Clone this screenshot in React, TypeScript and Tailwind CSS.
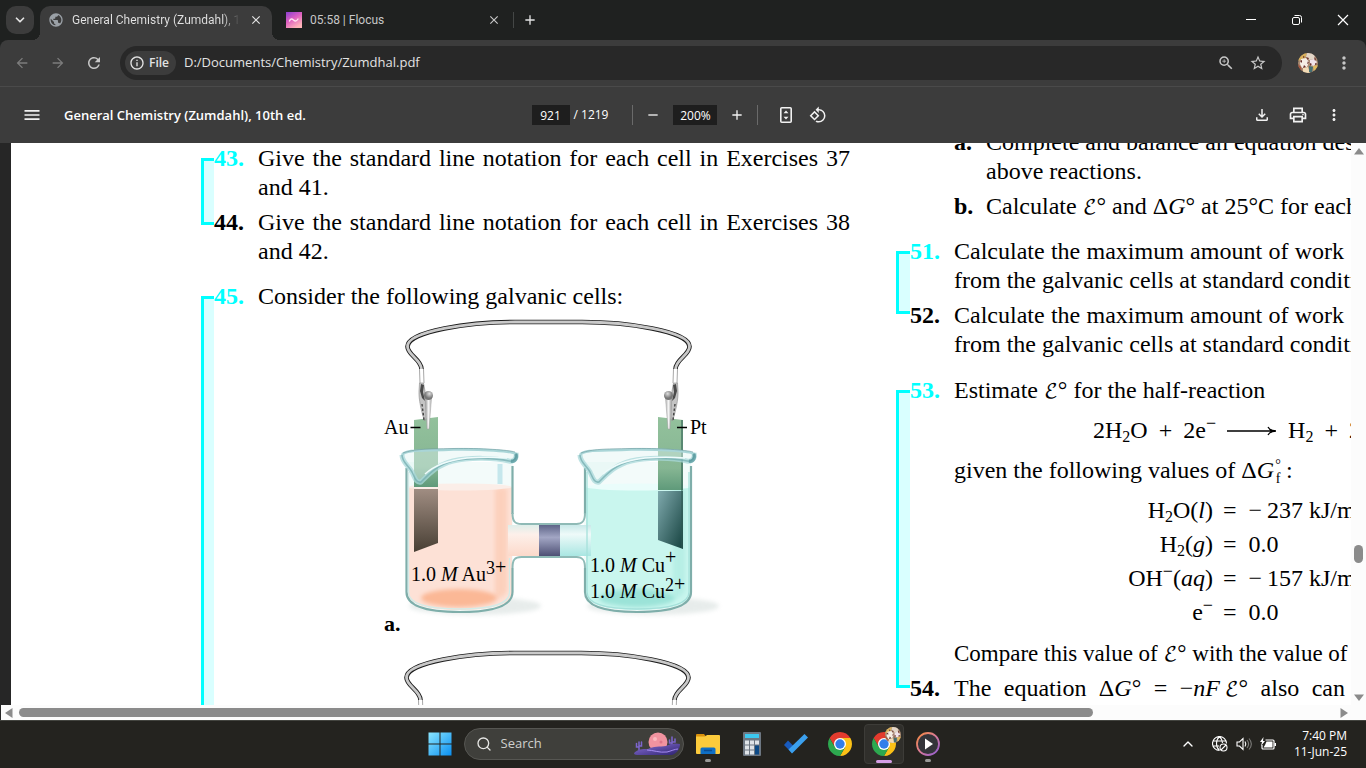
import type { ReactNode } from 'react';
import {
  MdArrowBack,
  MdArrowForward,
  MdRefresh,
  MdInfoOutline,
  MdZoomIn,
  MdStarBorder,
  MdMoreVert,
  MdOutlineFileDownload,
  MdOutlinePrint,
  MdMenu,
  MdPublic,
  MdClose,
  MdAdd,
  MdRemove,
  MdOutlineRotate90DegreesCcw,
} from 'react-icons/md';
import { ChevronDown, ChevronUp, Search } from 'lucide-react';

/* ---------- Shared bits ---------- */

interface IconButtonProps {
  label: string;
  className?: string;
  children: ReactNode;
}

function IconButton({ label, className = 'w-9 h-8', children }: IconButtonProps) {
  return (
    <button aria-label={label} className={`flex items-center justify-center flex-shrink-0 rounded-full ${className}`}>
      {children}
    </button>
  );
}

function ProfilePicture({ className }: { className: string }) {
  return (
    <svg viewBox="0 0 20 20" className={className}>
      <defs>
        <clipPath id="face">
          <circle cx="10" cy="10" r="10" />
        </clipPath>
      </defs>
      <g clipPath="url(#face)">
        <rect width="20" height="20" fill="#a98a72" />
        <path d="M0 0h9l-2 5-7 3z" fill="#d9b25c" />
        <path d="M9 0h7l1 6-6 1-3-3z" fill="#e3d6c8" />
        <path d="M3 6l5-1 3 4-2 5-5 1-2-4z" fill="#f6eee6" />
        <path d="M12 7l4-1 3 3-3 4-4-1z" fill="#f1e3ea" />
        <path d="M0 11l3 3 1 6H0z" fill="#a8543c" />
        <path d="M5 15l5-1 2 6H5z" fill="#f3dcb6" />
        <path d="M11 13l4 1-1 5h-3z" fill="#456f72" />
        <path d="M15 13l5-1v6l-4 2z" fill="#e0b95e" />
        <path d="M8 4l3 1-1 2zM12 10l2 1-2 2zM2 8l2-1v3zM16 4l2 2-1 2zM5 3l2 1-2 1zM10 8l1 2-2 1zM6 12l2 2-3 1zM17 10l2 1-2 1z" fill="#6a2f2b" />
      </g>
    </svg>
  );
}

/* ---------- Browser chrome ---------- */

function TabStrip() {
  return (
    <div className="flex h-10 items-end bg-[#1f2120] text-[#e3e3e3]">
      <button aria-label="Search tabs" className="mb-[6px] ml-[6px] flex h-7 w-7 items-center justify-center rounded-[10px] bg-[#3c3c3c]">
        <ChevronDown className="h-3.5 w-3.5" strokeWidth={3} />
      </button>
      <div className="relative ml-[6px] flex h-[34px] w-[232px] items-center rounded-t-[10px] bg-[#3c3c3c] pb-[6px] pl-2 before:absolute before:bottom-0 before:-left-2 before:h-2 before:w-2 before:bg-[radial-gradient(circle_at_0_0,transparent_8px,#3c3c3c_8px)] after:absolute after:-right-2 after:bottom-0 after:h-2 after:w-2 after:bg-[radial-gradient(circle_at_100%_0,transparent_8px,#3c3c3c_8px)]">
        <MdPublic className="h-4 w-4 flex-shrink-0 text-[#9aa0a6]" />
        <span className="ml-2 w-[168px] whitespace-nowrap bg-gradient-to-r from-[#e3e3e3] from-90% to-[#3c3c3c] bg-clip-text font-['Roboto',sans-serif] text-[12px] text-transparent">
          General Chemistry (Zumdahl), 1
        </span>
        <IconButton label="Close tab" className="ml-2 h-4 w-4">
          <MdClose className="h-3.5 w-3.5" />
        </IconButton>
      </div>
      <div className="flex h-[34px] w-[241px] items-center pb-[6px] pl-[14px] text-[#c7c7c7]">
        <svg viewBox="0 0 16 16" className="h-4 w-4 flex-shrink-0">
          <defs>
            <linearGradient id="flocus" x1="0" y1="0" x2="0.6" y2="1">
              <stop offset="0" stopColor="#8a3fd0" />
              <stop offset="0.5" stopColor="#dd5fc0" />
              <stop offset="1" stopColor="#ffb3b8" />
            </linearGradient>
          </defs>
          <rect width="16" height="16" fill="url(#flocus)" />
          <path d="M3.5 9c1-2.5 2.5-2.500 4-1s3 1.500 4.500-1" fill="none" stroke="#ffe3ef" strokeWidth="1.400" strokeLinecap="round" />
        </svg>
        <span className="ml-2 flex-1 whitespace-nowrap font-['Roboto',sans-serif] text-[12px]">05:58 | Flocus</span>
        <IconButton label="Close tab" className="mr-[11px] h-4 w-4">
          <MdClose className="h-3.5 w-3.5" />
        </IconButton>
      </div>
      <div className="mb-3 h-4 w-px bg-[#444746]" />
      <IconButton label="New tab" className="mb-1 h-8 w-8">
        <MdAdd className="h-4 w-4" />
      </IconButton>
      <div className="ml-auto flex h-10 text-white">
        <IconButton label="Minimize" className="h-10 w-[46px]">
          <svg viewBox="0 0 12 12" className="h-3 w-3" fill="none" stroke="currentColor">
            <path d="M1 5.500h10" />
          </svg>
        </IconButton>
        <IconButton label="Restore" className="h-10 w-[46px]">
          <svg viewBox="0 0 12 12" className="h-3 w-3" fill="none" stroke="currentColor">
            <rect x="1.500" y="3.500" width="7" height="7" rx="1.500" />
            <path d="M3.500 1.500h5a2 2 0 012 2v5" />
          </svg>
        </IconButton>
        <IconButton label="Close" className="h-10 w-[46px]">
          <svg viewBox="0 0 12 12" className="h-3 w-3" fill="none" stroke="currentColor" strokeWidth="1.200">
            <path d="M1 1l10 10M11 1L1 11" />
          </svg>
        </IconButton>
      </div>
    </div>
  );
}

function AddressBar() {
  return (
    <div className="bg-[#1f2120]">
      <div className="flex h-[46px] items-center rounded-t-lg bg-[#3c3c3c] pl-1 text-[#c7c7c7]">
        <IconButton label="Back">
          <MdArrowBack className="h-4 w-4 text-[#7c7c7c]" />
        </IconButton>
        <IconButton label="Forward">
          <MdArrowForward className="h-4 w-4 text-[#7c7c7c]" />
        </IconButton>
        <IconButton label="Reload">
          <MdRefresh className="h-[18px] w-[18px]" />
        </IconButton>
        <div className="ml-2 flex h-[34px] flex-1 items-center rounded-full bg-[#282828] pl-[5px] pr-2">
          <button className="flex h-6 w-[51px] items-center gap-1 rounded-full bg-[#3c3c3c] pl-1 text-[12px] font-semibold text-[#e3e3e3]">
            <MdInfoOutline className="h-4 w-4" />
            File
          </button>
          <input
            aria-label="Address"
            defaultValue="D:/Documents/Chemistry/Zumdhal.pdf"
            className="ml-2 min-w-0 flex-1 bg-transparent text-[13px] text-[#e3e3e3] outline-none"
          />
          <IconButton label="Zoom" className="h-8 w-8">
            <MdZoomIn className="h-[18px] w-[18px]" />
          </IconButton>
          <IconButton label="Bookmark this page" className="h-8 w-8">
            <MdStarBorder className="h-[18px] w-[18px]" />
          </IconButton>
        </div>
        <IconButton label="Profile" className="ml-2 h-9 w-9">
          <ProfilePicture className="h-5 w-5" />
        </IconButton>
        <IconButton label="Menu" className="mr-1 h-9 w-9">
          <MdMoreVert className="h-5 w-5" />
        </IconButton>
      </div>
    </div>
  );
}

function PdfToolbar() {
  return (
    <div className="grid h-[57px] grid-cols-[1fr_auto_1fr] items-center border-t border-[#4a4a4a] bg-[#3c3c3c] text-[12px] text-[#f1f1f1]">
      <div className="flex items-center pl-4">
        <IconButton label="Menu" className="h-8 w-8">
          <MdMenu className="h-5 w-5" />
        </IconButton>
        <h1 className="ml-4 whitespace-nowrap pt-[2px] text-[13px] font-semibold text-white">General Chemistry (Zumdahl), 10th ed.</h1>
      </div>
      <div className="flex items-center">
        <input
          aria-label="Page number"
          defaultValue="921"
          className="h-5 w-[38px] bg-[#1e1e1e] text-center text-white outline-none"
        />
        <span className="ml-1 whitespace-nowrap text-white">/ 1219</span>
        <div className="ml-6 h-5 w-px bg-[#6a6a6a]" />
        <IconButton label="Zoom out" className="ml-1 h-8 w-8">
          <MdRemove className="h-4 w-4" />
        </IconButton>
        <input
          aria-label="Zoom level"
          defaultValue="200%"
          className="ml-1 h-5 w-11 bg-[#1e1e1e] text-center text-white outline-none"
        />
        <IconButton label="Zoom in" className="ml-1 h-8 w-8">
          <MdAdd className="h-4 w-4" />
        </IconButton>
        <div className="ml-1 h-5 w-px bg-[#6a6a6a]" />
        <IconButton label="Fit to page" className="ml-3 h-8 w-8">
          <svg viewBox="0 0 20 20" className="h-5 w-5">
            <rect x="4.800" y="2.800" width="10.400" height="14.400" rx="1" fill="none" stroke="currentColor" strokeWidth="1.600" />
            <path d="M10 5.500l2.500 2.700h-5zM10 14.500l-2.500-2.700h5z" fill="currentColor" />
          </svg>
        </IconButton>
        <IconButton label="Rotate counterclockwise" className="h-8 w-8">
          <MdOutlineRotate90DegreesCcw className="h-[18px] w-[18px]" />
        </IconButton>
      </div>
      <div className="flex items-center justify-end gap-1 pr-4">
        <IconButton label="Download" className="h-8 w-8">
          <MdOutlineFileDownload className="h-[18px] w-[18px]" />
        </IconButton>
        <IconButton label="Print" className="h-8 w-8">
          <MdOutlinePrint className="h-5 w-5" />
        </IconButton>
        <IconButton label="More actions" className="h-8 w-8">
          <MdMoreVert className="h-[18px] w-[18px]" />
        </IconButton>
      </div>
    </div>
  );
}

/* ---------- Document ---------- */

function ScriptE() {
  return (
    <>
      <span className="font-['DejaVu_Math_TeX_Gyre','DejaVu_Sans',serif] text-[20px] leading-none">ℰ</span>°
    </>
  );
}

function DeltaG() {
  return (
    <>
      Δ<i>G</i>
    </>
  );
}

interface ExerciseProps {
  num: string;
  highlight?: boolean;
  children: ReactNode;
}

function Exercise({ num, highlight, children }: ExerciseProps) {
  return (
    <div className="flex">
      <b className={`w-11 flex-shrink-0 ${highlight ? 'text-[#00ffff]' : 'text-black'}`}>{num}.</b>
      <div className="min-w-0 flex-1">{children}</div>
    </div>
  );
}

// Cyan bracket that ties a pair of exercises together
function Bracket({ className }: { className: string }) {
  return <div className={`flex-shrink-0 border-l-[3px] border-[#00ffff] bg-[#d9ffff] ${className}`} />;
}

function Wire() {
  const d = 'M421.500 369C421 359 407.500 355 407.500 346.500C407.500 331 470 322 515 322H582C626 322 689.500 331 689.500 346.500C689.500 355 676 359 675.500 369';
  return (
    <g fill="none">
      <path d={d} stroke="#1c1c1c" strokeWidth="4.600" />
      <path d={d} stroke="#c9c9c9" strokeWidth="2.800" />
    </g>
  );
}

function Clip() {
  return (
    <g>
      <path d="M419.500 369l.5 14M423.500 369l.5 14" stroke="#a8a8a8" strokeWidth="1" fill="none" />
      <path d="M419.500 383h4l1.500 8 1 28-1.500 2c-3-9-6-22-5.500-30z" fill="#c4c4c4" stroke="#8a8a8a" strokeWidth=".6" />
      <path d="M421 384l3 1-1 7 2 9-3-3-2-7z" fill="#4a4a4a" />
      <path d="M422 404l2 16" stroke="#444" strokeWidth="1.400" strokeDasharray="2.500 2" />
      <path d="M425.500 398h6l-2.500 31h-2z" fill="url(#metal)" stroke="#9d9d9d" strokeWidth=".5" />
      <circle cx="428.500" cy="395.500" r="4.500" fill="url(#ball)" />
    </g>
  );
}

function ClipPair() {
  return (
    <>
      <Clip />
      <g transform="translate(1097 0) scale(-1 1)">
        <Clip />
      </g>
    </>
  );
}

interface BeakerProps {
  x: number;
  liquid: string;
  deep: string;
  surface: string;
}

function Beaker({ x, liquid, deep, surface }: BeakerProps) {
  return (
    <g transform={`translate(${x} 0)`}>
      <ellipse cx="70" cy="606" rx="66" ry="9" fill="#8aa39d" opacity=".2" filter="url(#soft)" />
      <path d="M1 462h107v132c0 12-18 19-54 19S1 606 1 594z" fill="#f3fbfa" />
      <path d="M3 487h104v106c0 11-18 17-52 17S3 604 3 593z" fill={liquid} />
      <path d="M90 488h12v102c0 4-6 8-12 9z" fill={deep} opacity=".4" filter="url(#soft)" />
      <ellipse cx="54" cy="598" rx="38" ry="9" fill={deep} filter="url(#soft)" />
      <ellipse cx="55" cy="487" rx="52" ry="3.500" fill={surface} />
      <path d="M8 492v90" stroke="#fff" strokeWidth="3" opacity=".6" filter="url(#soft)" />
    </g>
  );
}

// Rim with its pouring lip, drawn over the electrode
function Rim({ x }: { x: number }) {
  const front = 'M-3 455C-3 462 3 465 7 472C10 478 11 483 16 482C24 474 32 465 48 461C66 457 90 458 104 461C110 462 112 457 111 453';
  return (
    <g transform={`translate(${x} 0)`} fill="none">
      <path d={`${front}C108 450 76 449 48 449C20 450 0 449 -3 455`} fill="#dff3f2" opacity=".45" />
      <path d="M-3 455C0 449 20 451 48 449.500C76 449 108 451 111 454" stroke="#a9d5d7" strokeWidth="2.600" />
      <path d="M-2 453C10 449 20 449 48 448.500C76 448 104 450 110 452" stroke="#6a9a9c" strokeWidth="1" opacity=".6" />
      <path d={front} stroke="#a8d8da" strokeWidth="5" opacity=".75" />
      <path d={front} stroke="#6fa9ad" strokeWidth="1.600" opacity=".7" />
      <path d="M20 474C30 465 44 460 62 458C76 457 90 457 102 458" stroke="#effbfb" strokeWidth="1.500" />
      <path d="M106 461C111 462 112 457 111 454" stroke="#4f9399" strokeWidth="3.500" opacity=".7" />
    </g>
  );
}

function GalvanicCell() {
  return (
    <svg viewBox="382 318 344 320" className="h-80 w-[344px]" role="img" aria-label="Galvanic cell with gold and platinum electrodes">
      <defs>
        <filter id="soft" x="-20%" y="-20%" width="140%" height="140%">
          <feGaussianBlur stdDeviation="2" />
        </filter>
        <linearGradient id="metal" x1="0" y1="0" x2="1" y2="0">
          <stop offset="0" stopColor="#a5a5a5" />
          <stop offset="0.500" stopColor="#f4f4f4" />
          <stop offset="1" stopColor="#b5b5b5" />
        </linearGradient>
        <radialGradient id="ball" cx=".6" cy=".3">
          <stop offset="0" stopColor="#dedede" />
          <stop offset="1" stopColor="#767676" />
        </radialGradient>
        <linearGradient id="gold" x1="0" y1="0" x2="0" y2="1">
          <stop offset="0" stopColor="#a08d82" />
          <stop offset="1" stopColor="#483f34" />
        </linearGradient>
        <linearGradient id="platinum" x1="0" y1="0" x2="1" y2="1">
          <stop offset="0" stopColor="#7fa9ad" />
          <stop offset="1" stopColor="#15423f" />
        </linearGradient>
        <linearGradient id="leaf" x1="0" y1="0" x2="0" y2="1">
          <stop offset="0" stopColor="#93c19c" />
          <stop offset="0.700" stopColor="#86b693" />
          <stop offset="1" stopColor="#5f9a7a" />
        </linearGradient>
        <linearGradient id="bridgeLeft" x1="0" y1="0" x2="0" y2="1">
          <stop offset="0" stopColor="#dfeeea" />
          <stop offset="0.300" stopColor="#fdf0ea" />
          <stop offset="1" stopColor="#fcd9ca" />
        </linearGradient>
        <linearGradient id="bridgeRight" x1="0" y1="0" x2="0" y2="1">
          <stop offset="0" stopColor="#c9e9e9" />
          <stop offset="0.300" stopColor="#eefaf9" />
          <stop offset="1" stopColor="#a9e6e2" />
        </linearGradient>
        <linearGradient id="membrane" x1="0" y1="0" x2="0" y2="1">
          <stop offset="0" stopColor="#5e6588" />
          <stop offset="0.400" stopColor="#a2a6c4" />
          <stop offset="1" stopColor="#4e5074" />
        </linearGradient>
      </defs>
      <Beaker x={405} liquid="#fde1d6" deep="#fbb896" surface="#fbeee8" />
      <Beaker x={583} liquid="#c9f6ee" deep="#9be3d8" surface="#eafdfb" />
      <path d="M508 525h32v31h-32z" fill="url(#bridgeLeft)" />
      <path d="M560 525h31v31h-31z" fill="url(#bridgeRight)" />
      <rect x="539" y="525" width="21" height="31" fill="url(#membrane)" />
      <path d="M414 420l24-3v70h-24z" fill="url(#leaf)" />
      <path d="M414 489h24v54l-24 9z" fill="url(#gold)" />
      <path d="M658 417l25 3v70h-25z" fill="url(#leaf)" />
      <path d="M658 491h25v58l-25-9z" fill="url(#platinum)" />
      <path d="M682 420v128" stroke="#2c5a52" strokeWidth="1.500" opacity=".7" />
      {/* Walls */}
      <g fill="none">
        <path d="M406.500 468v124c0 13 16 20 53 20s53-7 53-20v-24M512.500 514v-48" stroke="#7faeaa" strokeWidth="2.200" />
        <path d="M408.500 472v120c0 11 15 17 51 17s50-6 50-17v-34" stroke="#d3ebe8" strokeWidth="1.300" />
        <path d="M585 468v46M585 568v24c0 13 16 20 52 20s54-7 54-20V466" stroke="#7faeaa" strokeWidth="2.200" />
        <path d="M587 472v120c0 11 15 17 50 17s52-6 52-17V472" stroke="#a5e0da" strokeWidth="1.300" />
        <path d="M512.500 513c0 8 2 11 9 11h55c6 0 8.500-3 8.500-11M512.500 568c0-8 2-11 9-11h55c6 0 8.500 3 8.500 11" stroke="#8fbab6" strokeWidth="2" />
        <path d="M500 464v20" stroke="#a6dbe2" strokeWidth="5" opacity=".6" />
      </g>
      <Rim x={405} />
      <Rim x={583} />
      <Wire />
      <ClipPair />
      <path d="M410.500 427.500h10M677 427.500h10" stroke="#000" strokeWidth="1.300" />
      <g className="font-['Liberation_Serif',serif] text-[20px]" fill="#000">
        <text x="384" y="434">Au</text>
        <text x="690" y="434">Pt</text>
        <text x="411" y="581">
          1.0 <tspan fontStyle="italic">M</tspan> Au<tspan dy="-7" className="text-[18px]">3</tspan>+
        </text>
        <text x="590" y="572">
          1.0 <tspan fontStyle="italic">M</tspan> Cu<tspan dy="-8">+</tspan>
        </text>
        <text x="590" y="598">
          1.0 <tspan fontStyle="italic">M</tspan> Cu<tspan dy="-7" className="text-[18px]">2</tspan>+
        </text>
      </g>
    </svg>
  );
}

function LeftColumn() {
  return (
    <div className="pt-px">
      <div className="flex">
        <Bracket className="mb-[41px] mt-[14px] w-[13px] border-y-[3px]" />
        <div className="flex-1 space-y-[6px] text-justify">
          <Exercise num="43" highlight>
            Give the standard line notation for each cell in Exercises 37 and 41.
          </Exercise>
          <Exercise num="44">Give the standard line notation for each cell in Exercises 38 and 42.</Exercise>
        </div>
      </div>
      <div className="mt-4 flex">
        <Bracket className="mt-[14px] w-[13px] border-t-[3px]" />
        <div className="flex-1">
          <Exercise num="45" highlight>
            Consider the following galvanic cells:
          </Exercise>
          <div className="ml-[168px] mt-[7px] grid">
            <div className="col-start-1 row-start-1">
              <GalvanicCell />
            </div>
            <b className="col-start-1 row-start-1 self-end pl-[2px] text-[22px]">a.</b>
          </div>
          <svg viewBox="383 318 344 80" className="ml-[168px] mt-[11px] h-20 w-[344px]">
            <Wire />
            <ClipPair />
          </svg>
        </div>
      </div>
    </div>
  );
}

function RightColumn() {
  return (
    <div className="-mt-[15px]">
      <div className="ml-[58px]">
        <div className="flex">
          <b className="w-8 flex-shrink-0">a.</b>
          <p className="whitespace-nowrap">
            Complete and balance an equation des
            <br />
            above reactions.
          </p>
        </div>
        <div className="mt-[6px] flex">
          <b className="w-8 flex-shrink-0">b.</b>
          <p className="whitespace-nowrap">
            Calculate <ScriptE /> and <DeltaG />° at 25°C for each
          </p>
        </div>
      </div>

      <div className="mt-4 flex">
        <Bracket className="mb-[45px] mt-[14px] w-[14px] border-y-[3px]" />
        <div className="flex-1 space-y-[6px] whitespace-nowrap">
          <Exercise num="51" highlight>
            <p className="w-[390px] [text-align-last:justify]">Calculate the maximum amount of work</p>
            <p>from the galvanic cells at standard conditi</p>
          </Exercise>
          <Exercise num="52">
            <p className="w-[390px] [text-align-last:justify]">Calculate the maximum amount of work</p>
            <p>from the galvanic cells at standard conditi</p>
          </Exercise>
        </div>
      </div>

      <div className="mt-[17px] flex">
        <Bracket className="mb-[15px] mt-[14px] w-[14px] border-y-[3px]" />
        <div className="flex-1 whitespace-nowrap [&_sub]:text-[16px]">
          <Exercise num="53" highlight>
            <p>
              Estimate <ScriptE /> for the half-reaction
            </p>
            <p className="mt-[11px] flex items-center gap-[11px] pl-[139px]">
              <span>
                2H<sub>2</sub>O
              </span>
              <span>+</span>
              <span>
                2e<sup>−</sup>
              </span>
              <svg viewBox="0 0 50 10" className="h-[10px] w-[50px]" fill="none" stroke="#000" strokeWidth="1.300">
                <path d="M0 5h48M41 1c1 2 4 4 8 4-4 0-7 2-8 4" />
              </svg>
              <span>
                H<sub>2</sub>
              </span>
              <span>+</span>
              <span>2</span>
            </p>
            <p className="mt-[11px] flex">
              given the following values of&nbsp;
              <DeltaG />
              <span className="mr-1 flex h-[29px] w-2 flex-col items-center pt-[2px] text-[14px] leading-[14px]">
                <span>°</span>
                <span>f</span>
              </span>
              :
            </p>
            <table className="mt-2">
              <tbody>
                <Row value="−&#8201;237 kJ/m">
                  H<sub>2</sub>O(<i>l</i>)
                </Row>
                <Row value="0.0">
                  H<sub>2</sub>(<i>g</i>)
                </Row>
                <Row value="−&#8201;157 kJ/m">
                  OH<sup>−</sup>(<i>aq</i>)
                </Row>
                <Row value="0.0">
                  e<sup>−</sup>
                </Row>
              </tbody>
            </table>
            <p className="mt-[10px] text-[23px]">
              Compare this value of <ScriptE /> with the value of <ScriptE />
            </p>
          </Exercise>
          <div className="mt-[6px]">
            <Exercise num="54">
              <p className="w-[391px] [text-align-last:justify]">
                The equation <DeltaG />° = −<i>nF</i>&thinsp;<ScriptE /> also can
              </p>
            </Exercise>
          </div>
        </div>
      </div>
    </div>
  );
}

function Row({ value, children }: { value: string; children: ReactNode }) {
  return (
    <tr className="h-[34px]">
      <td className="w-[259px] text-right">{children}</td>
      <td className="pl-[10px] pr-3">=</td>
      <td>{value}</td>
    </tr>
  );
}

function Viewer() {
  return (
    <main className="flex min-h-0 flex-1 flex-col bg-[#262626]">
      <div className="flex min-h-0 flex-1">
        <div className="ml-[11px] min-w-0 flex-1 overflow-hidden bg-white pl-[190px] font-['Liberation_Serif',serif] text-[24px] leading-[29px] text-black">
          <div className="grid grid-cols-[649px_650px] gap-x-[46px]">
            <LeftColumn />
            <RightColumn />
          </div>
        </div>
        <div className="flex w-[15px] flex-col items-center bg-[#fcfcfc] pb-1 pt-[5px]">
          <svg viewBox="0 0 10 7" className="h-[7px] w-[10px]" fill="#8b8b8b">
            <path d="M5 0l5 6.500H0z" />
          </svg>
          <div className="flex-[390]" />
          <div className="h-[18px] w-[9px] rounded-full bg-[#8b8b8b]" />
          <div className="flex-[131]" />
          <svg viewBox="0 0 10 7" className="h-[7px] w-[10px]" fill="#8b8b8b">
            <path d="M5 7l5-6.500H0z" />
          </svg>
        </div>
      </div>
      <div className="ml-px flex h-[15px] items-center bg-[#fcfcfc] pl-1 pr-[18px]">
        <svg viewBox="0 0 8 10" className="h-[10px] w-2" fill="#8b8b8b">
          <path d="M0 5l7.500-5v10z" />
        </svg>
        <div className="mx-[6px] flex flex-1">
          <div className="h-[9px] flex-[1074] rounded-full bg-[#8b8b8b]" />
          <div className="flex-[241]" />
        </div>
        <svg viewBox="0 0 8 10" className="h-[10px] w-2" fill="#8b8b8b">
          <path d="M8 5L.5 0v10z" />
        </svg>
      </div>
    </main>
  );
}

/* ---------- Taskbar ---------- */

function ChromeLogo() {
  return (
    <svg viewBox="0 0 24 24" className="h-6 w-6">
      <path d="M12 0a12 12 0 0110.390 6H12L6.800 15 1.610 6A12 12 0 0112 0z" fill="#e33b2e" />
      <path d="M22.390 6A12 12 0 0112 24l5.200-9L12 6z" fill="#fbc116" />
      <path d="M1.610 6A12 12 0 0012 24l5.200-9H6.800z" fill="#2da94f" />
      <circle cx="12" cy="12" r="6" fill="#fff" />
      <circle cx="12" cy="12" r="4.700" fill="#2f7de9" />
    </svg>
  );
}

interface TaskProps {
  label: string;
  running?: boolean;
  children: ReactNode;
}

function Task({ label, running, children }: TaskProps) {
  return (
    <button aria-label={label} className="relative flex h-10 w-11 items-center justify-center">
      {children}
      {running && <span className="absolute bottom-[2px] h-[3px] w-[6px] rounded-full bg-[#9a9a98]" />}
    </button>
  );
}

function Taskbar() {
  return (
    <footer className="grid h-12 grid-cols-[1fr_auto_1fr] items-center border-t border-[#43443f] bg-[#24231f] pb-px pl-px">
      <div />
      <div className="flex items-center">
        <Task label="Start">
          <svg viewBox="0 0 24 24" className="h-6 w-6">
            <defs>
              <linearGradient id="win" x1="0" y1="0" x2="1" y2="1">
                <stop offset="0" stopColor="#8be6ff" />
                <stop offset="1" stopColor="#0a8ff0" />
              </linearGradient>
            </defs>
            <path d="M.5.5h11v11H.5zM12.500.5h11v11h-11zM.5 12.500h11v11H.5zM12.500 12.500h11v11h-11z" fill="url(#win)" />
          </svg>
        </Task>
        <label className="mx-[2px] flex h-8 w-[220px] items-center overflow-hidden rounded-full border border-[#565652] bg-[#3f3f3b] pl-[11px] text-[#e6e6e4]">
          <Search className="h-4 w-4 flex-shrink-0" strokeWidth={2} />
          <input
            aria-label="Search"
            placeholder="Search"
            className="ml-[9px] min-w-0 flex-1 bg-transparent text-[13px] outline-none placeholder:text-[#cfcfcd]"
          />
          <svg viewBox="0 0 48 24" className="mr-[2px] h-6 w-12 flex-shrink-0">
            <defs>
              <linearGradient id="dune" x1="0" y1="0" x2="1" y2="1">
                <stop offset="0" stopColor="#8e74d8" />
                <stop offset="1" stopColor="#2c2170" />
              </linearGradient>
            </defs>
            <circle cx="25" cy="10" r="9.500" fill="#f193a0" />
            <circle cx="22" cy="7" r="2" fill="#fbb9bf" />
            <circle cx="28" cy="10" r="1.500" fill="#dd7488" />
            <path d="M6 18v-8M6 15H3.500v-3.500M6 14h2.500v-4M39 14V5M39 11h-2.500V8M39 10h3V7" fill="none" stroke="#7e66cf" strokeWidth="1.500" strokeLinecap="round" />
            <path d="M1 21c4-4 8-4 14-4 5-3 12-2 18-3 5-3 10-3 14-2 0 5-3 9-8 11H4c-2 0-3-1-3-2z" fill="url(#dune)" />
            <path d="M14 18c6 0 12 3 20 2 4-1 8-3 11-3" fill="none" stroke="#a58cf0" strokeWidth="1" />
          </svg>
        </label>
        <Task label="File Explorer" running>
          <svg viewBox="0 0 24 24" className="h-6 w-6">
            <path d="M0 3a1 1 0 011-1h7l2.500 3H0z" fill="#d9910c" />
            <path d="M0 4.500h9L11 3h12a1 1 0 011 1v17a1 1 0 01-1 1H1a1 1 0 01-1-1z" fill="#fccb3c" />
            <path d="M4.500 22v-5a1.500 1.500 0 011.500-1.500h12a1.500 1.500 0 011.500 1.500v5z" fill="#0f6fc5" />
            <path d="M8 18.500h8" stroke="#0a4c92" strokeWidth="1.500" />
          </svg>
        </Task>
        <Task label="Calculator">
          <svg viewBox="0 0 18 24" className="h-6 w-[18px]">
            <rect width="18" height="24" rx="1" fill="#6d7782" />
            <rect x="2" y="2" width="14" height="4" fill="#3cc8f0" />
            <path d="M2 8.500h4v4H2zM7 8.500h4v4H7zM12 8.500h4v4h-4zM2 13.500h4v4H2zM7 13.500h4v4H7zM2 18.500h4v4H2zM7 18.500h4v4H7z" fill="#dfe4e8" />
            <path d="M12 13.500h4v9h-4z" fill="#0d4a86" />
          </svg>
        </Task>
        <Task label="To Do">
          <svg viewBox="0 0 24 24" className="h-6 w-6">
            <path d="M0 13l4-4.500 8 8-4 4.500z" fill="#185abd" />
            <path d="M8 21.500l-3.500-4L20.500 2l3.500 3.500z" fill="#3ba0ee" />
          </svg>
        </Task>
        <Task label="Google Chrome">
          <ChromeLogo />
        </Task>
        <div className="mx-[2px] rounded-[4px] border border-[#3d3c38] bg-[#302f2b]">
          <button aria-label="Google Chrome, work profile" className="relative flex h-[38px] w-[38px] items-center justify-center">
            <ChromeLogo />
            <ProfilePicture className="absolute right-[2px] top-[2px] h-4 w-4" />
            <span className="absolute bottom-0 h-[3px] w-4 rounded-full bg-[#d69fe6]" />
          </button>
        </div>
        <Task label="Media Player" running>
          <svg viewBox="0 0 24 24" className="h-6 w-6">
            <defs>
              <linearGradient id="ring" x1="0" y1="0" x2="1" y2="1">
                <stop offset="0" stopColor="#f58a3c" />
                <stop offset="0.500" stopColor="#d97a9a" />
                <stop offset="1" stopColor="#8a5ad6" />
              </linearGradient>
            </defs>
            <circle cx="12" cy="12" r="11" fill="#33343a" stroke="url(#ring)" strokeWidth="1.800" />
            <path d="M9 6.500l8 5.500-8 5.500z" fill="#fff" />
          </svg>
        </Task>
      </div>
      <div className="flex items-center justify-end pr-[19px] text-white">
        <IconButton label="Show hidden icons" className="mr-3 h-8 w-6">
          <ChevronUp className="h-4 w-4" />
        </IconButton>
        <button aria-label="Network, sound and battery" className="flex items-center gap-2">
          <svg viewBox="0 0 16 16" className="h-4 w-4" fill="none" stroke="currentColor" strokeWidth="1.100">
            <path d="M7.500 14.500a7 7 0 117-7M7.500.500c-4 3.500-4 10.500 0 14M7.500.500c2 2 3 4 3 6.500M1 5h13M1 10h6" />
            <circle cx="11.500" cy="11.500" r="3.500" />
            <path d="M9 14l5-5" />
          </svg>
          <svg viewBox="0 0 16 16" className="h-4 w-4" fill="none" stroke="currentColor" strokeWidth="1.100">
            <path d="M1 6h2.500L7 2.500v11L3.500 10H1zM9 5.500c1 1.500 1 3.500 0 5" />
            <path d="M11 4c2 2.500 2 5.500 0 8M13 2.500c3 3.500 3 7.500 0 11" opacity=".4" />
          </svg>
          <svg viewBox="0 0 16 16" className="h-4 w-4">
            <path d="M5.500 4H13a1 1 0 011 1v7a1 1 0 01-1 1H3a1 1 0 01-1-1V9" fill="none" stroke="currentColor" strokeWidth="1.200" />
            <path d="M6.500 5.500h6v6h-9L5 9z" fill="currentColor" />
            <path d="M14.500 7h1.500v3h-1.500zM3.500 1L0 6h2l-1 4 4-5H3z" fill="currentColor" />
          </svg>
        </button>
        <div className="ml-[18px] text-right text-[12px] leading-4">
          <div>7:40 PM</div>
          <div>11-Jun-25</div>
        </div>
      </div>
    </footer>
  );
}

export default function App() {
  return (
    <div className="flex h-screen flex-col overflow-hidden font-['Open_Sans','Noto_Sans',sans-serif]">
      <TabStrip />
      <AddressBar />
      <PdfToolbar />
      <Viewer />
      <Taskbar />
    </div>
  );
}
